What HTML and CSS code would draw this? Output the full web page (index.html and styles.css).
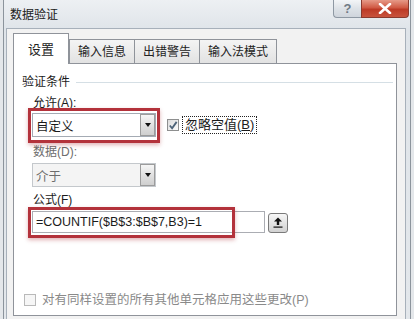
FILE: index.html
```html
<!DOCTYPE html>
<html lang="zh-CN">
<head>
  <meta charset="UTF-8" />
  <title>数据验证</title>
  <link rel="stylesheet" href="styles.css">
</head>
<body>
  <div class="window">
    <div class="titlebar">
      <div class="title">数据验证</div>
      <div class="caption-btns">
        <div class="help-btn">?</div>
        <div class="close-btn">
          <svg width="14" height="11" viewBox="0 0 14 11"><path d="M2 1 L12 10 M12 1 L2 10" stroke="#fff" stroke-width="2.6" stroke-linecap="round"/></svg>
        </div>
      </div>
    </div>

    <div class="client">
      <!-- tabs -->
      <div class="tabs">
        <div class="tab active">设置</div>
        <div class="tab">输入信息</div>
        <div class="tab">出错警告</div>
        <div class="tab">输入法模式</div>
      </div>

      <div class="panel">
        <div class="group-title">验证条件</div>

        <div class="field-label">允许(A):</div>
        <div class="row">
          <div class="combo">
            <span class="combo-text">自定义</span>
            <span class="combo-btn"><i class="arrow"></i></span>
          </div>
          <div class="check-wrap">
            <span class="checkbox checked">
              <svg width="11" height="11" viewBox="0 0 11 11"><path d="M2 5.5 L4.5 8.5 L9.5 1.5" fill="none" stroke="#4d6378" stroke-width="2"/></svg>
            </span>
            <span class="focus-label">忽略空值(<u>B</u>)</span>
          </div>
        </div>

        <div class="field-label disabled">数据(D):</div>
        <div class="combo disabled">
          <span class="combo-text">介于</span>
          <span class="combo-btn"><i class="arrow"></i></span>
        </div>

        <div class="field-label">公式(F)</div>
        <div class="row">
          <div class="formula">=COUNTIF($B$3:$B$7,B3)=1</div>
          <div class="ref-btn">
            <svg width="10" height="11" viewBox="0 0 10 11"><path d="M5 0.5 L9 4.5 L6.2 4.5 L6.2 8 L3.8 8 L3.8 4.5 L1 4.5 Z" fill="#111"/><rect x="0.5" y="9.5" width="9" height="1.2" fill="#111"/></svg>
          </div>
        </div>

        <div class="apply-row">
          <span class="checkbox"></span>
          <span>对有同样设置的所有其他单元格应用这些更改(P)</span>
        </div>

        <!-- red annotation boxes -->
        <div class="mark mark-allow"></div>
        <div class="mark mark-formula"></div>
      </div>
    </div>
  </div>
</body>
</html>
```

FILE: styles.css
```css
body {
  margin: 0;
  background: #e4e7ea;
  font-family: "Liberation Sans", "Noto Sans CJK SC", sans-serif;
  font-size: 12px;
  color: #1b1b1b;
}
.window {
  margin-left: 3px;
  width: 408px;
  height: 319px;
  box-sizing: border-box;
  border-left: 1px solid #8c949c;
  border-right: 1px solid #8c949c;
  background: linear-gradient(#edf0f3, #dfe4e9 30px, #e3e7eb);
  padding: 0 4px 0 2px;
  overflow: hidden;
}
.titlebar {
  height: 28px;
  display: flex;
  align-items: flex-start;
}
.title {
  margin: 7px 0 0 4px;
  line-height: 16px;
  color: #202020;
}
.caption-btns {
  margin-left: auto;
  margin-right: -3px;
  display: flex;
}
.help-btn {
  width: 28px;
  height: 18px;
  box-sizing: border-box;
  border: 1px solid #8e98a3;
  border-top: none;
  border-right: none;
  border-radius: 0 0 0 4px;
  background: linear-gradient(#f3f5f7, #dde2e7 50%, #cfd5dc);
  color: #707a85;
  font-size: 13px;
  font-weight: bold;
  text-align: center;
  line-height: 17px;
}
.close-btn {
  width: 48px;
  height: 18px;
  box-sizing: border-box;
  border: 1px solid #8a3a2e;
  border-top: none;
  border-radius: 0 0 4px 0;
  background: linear-gradient(#e69a88, #d05a44 45%, #bd3a26 55%, #c8533d);
  display: flex;
  align-items: center;
  justify-content: center;
}
.client {
  height: 300px;
  box-sizing: border-box;
  border: 1px solid #a7b0ba;
  background: #f2f2f2;
  padding: 4px 8px 0 6px;
}
.tabs {
  height: 30px;
  display: flex;
  align-items: flex-end;
  position: relative;
  z-index: 1;
}
.tab {
  height: 24px;
  box-sizing: border-box;
  padding: 0 8px;
  border: 1px solid #8f939a;
  border-bottom: none;
  margin-left: -1px;
  background: linear-gradient(#f4f4f4, #e2e2e2);
  line-height: 24px;
  color: #222;
}
.tab.active {
  height: 31px;
  margin-left: 0;
  margin-bottom: -1px;
  padding: 0 14px;
  background: #fff;
  font-size: 13px;
  line-height: 32px;
}
.tab.active + .tab {
  margin-left: 0;
}
.panel {
  position: relative;
  height: 253px;
  box-sizing: border-box;
  border: 1px solid #8f939a;
  background: #fff;
  padding: 10px 3px 0 8px;
}
.group-title {
  display: flex;
  align-items: center;
  gap: 6px;
  line-height: 16px;
}
.group-title::after {
  content: "";
  flex: 1;
  height: 1px;
  background: #d5dfe5;
}
.field-label {
  margin: 5px 0 0 11px;
  line-height: 16px;
}
.field-label.disabled {
  margin-top: 7px;
  color: #6d6d6d;
}
.row {
  display: flex;
  align-items: center;
  margin-left: 10px;
}
.combo {
  margin-top: 2px;
  width: 124px;
  height: 24px;
  box-sizing: border-box;
  border: 1px solid #a4abb4;
  background: #fff;
  display: flex;
  align-items: center;
}
.combo.disabled {
  margin: 3px 0 0 10px;
  background: #f4f4f4;
  border-color: #c4c8cc;
  color: #6d6d6d;
}
.combo-text {
  flex: 1;
  padding-left: 3px;
  font-size: 12.5px;
}
.combo-btn {
  width: 15px;
  height: 22px;
  box-sizing: border-box;
  border: 1px solid #9c9c9c;
  background: linear-gradient(#f6f6f6, #e1e1e1 50%, #cfcfcf);
  display: flex;
  align-items: center;
  justify-content: center;
}
.arrow {
  width: 0;
  height: 0;
  border-left: 3.5px solid transparent;
  border-right: 3.5px solid transparent;
  border-top: 4px solid #111;
}
.check-wrap {
  margin: 2px 0 0 11px;
  display: flex;
  align-items: center;
  gap: 3px;
}
.checkbox {
  width: 12px;
  height: 12px;
  box-sizing: border-box;
  border: 1px solid #8e8f8f;
  background: linear-gradient(135deg, #dcdcdc, #fbfbfb);
  display: flex;
  align-items: center;
  justify-content: center;
}
.focus-label {
  border: 1px dotted #222;
  padding: 0 2px;
  line-height: 16px;
  font-size: 13px;
}
.formula {
  margin-top: 3px;
  width: 233px;
  height: 22px;
  box-sizing: border-box;
  border: 1px solid #abadb3;
  padding-left: 3px;
  font-size: 12.5px;
  line-height: 20px;
}
.ref-btn {
  margin: 4px 0 0 3px;
  width: 20px;
  height: 20px;
  box-sizing: border-box;
  border: 1px solid #7a7a7a;
  border-radius: 3px;
  background: linear-gradient(#f7f7f7, #e4e4e4 50%, #d2d2d2);
  display: flex;
  align-items: center;
  justify-content: center;
}
.apply-row {
  margin: 59px 0 0 2px;
  display: flex;
  align-items: center;
  gap: 6px;
  line-height: 16px;
  font-size: 12.5px;
  color: #8a8a8a;
}
.apply-row .checkbox {
  border-color: #b9b9b9;
  background: #f6f6f6;
}
.mark {
  position: absolute;
  box-sizing: border-box;
  border: 3px solid #b3323b;
  box-shadow: 0 2px 4px rgba(170, 40, 50, 0.35);
}
.mark-allow {
  left: 14px;
  top: 44px;
  width: 132px;
  height: 35px;
}
.mark-formula {
  left: 14px;
  top: 143px;
  width: 207px;
  height: 31px;
}
```
